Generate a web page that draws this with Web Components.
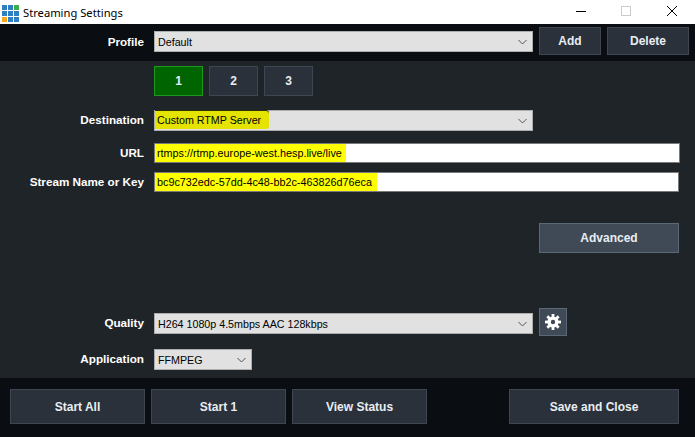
<!DOCTYPE html>
<html lang="en">
<head>
<meta charset="utf-8">
<title>Streaming Settings</title>
<style>
  html, body { margin: 0; height: 100%; background: #1f2429; }
  body { font-family: "Liberation Sans", Arial, sans-serif; overflow: hidden; }
  .page { display: flex; flex-direction: column; width: 695px; height: 437px; }
  .main { display: flex; flex-direction: column; height: 317px; box-sizing: border-box; padding-top: 5px; }
  .footer-gap { width: 70px; }
</style>
</head>
<body>
<div class="page">
  <title-bar>Streaming Settings</title-bar>

  <dark-band kind="top">
    <form-row label="Profile">
      <combo-box width="379" style="margin-top:1px">Default</combo-box>
      <vm-button w="62" h="28" style="margin-left:6px">Add</vm-button>
      <vm-button w="82" h="28" style="margin-left:6px">Delete</vm-button>
    </form-row>
  </dark-band>

  <div class="main">
    <tab-strip></tab-strip>
    <form-row label="Destination" style="margin-top:14px;--lb:2px">
      <combo-box width="379" mark="114" tone="#e4e400">Custom RTMP Server</combo-box>
    </form-row>
    <form-row label="URL" style="margin-top:12px;--lb:2px">
      <text-field width="526" mark="191">rtmps://rtmp.europe-west.hesp.live/live</text-field>
    </form-row>
    <form-row label="Stream Name or Key" style="margin-top:9px;--lb:2px">
      <text-field width="525" mark="222">bc9c732edc-57dd-4c48-bb2c-463826d76eca</text-field>
    </form-row>
    <form-row style="margin-top:31px">
      <vm-button w="140" h="30" tone="light" style="margin-left:385px">Advanced</vm-button>
    </form-row>
    <form-row label="Quality" style="margin-top:55px">
      <combo-box width="379" style="margin-top:3px">H264 1080p 4.5mbps AAC 128kbps</combo-box>
      <vm-button w="28" h="28" tone="light" style="margin-left:6px"><gear-icon></gear-icon></vm-button>
    </form-row>
    <form-row label="Application" style="margin-top:13px;--lb:2px">
      <combo-box width="98">FFMPEG</combo-box>
    </form-row>
  </div>

  <dark-band kind="bottom">
    <vm-button w="135" h="35">Start All</vm-button>
    <vm-button w="135" h="35">Start 1</vm-button>
    <vm-button w="135" h="35">View Status</vm-button>
    <span class="footer-gap"></span>
    <vm-button w="170" h="35">Save and Close</vm-button>
  </dark-band>
</div>

<script>
  // shadow root helper
  function shadow(el, html) {
    el.attachShadow({ mode: 'open' }).innerHTML = html;
  }

  class TitleBar extends HTMLElement {
    connectedCallback() {
      shadow(this, `
        <style>
          :host { display: flex; align-items: center; height: 24px; background: #fff; color: #000;
                  font: 11.2px "Noto Sans", "Liberation Sans", sans-serif; }
          .logo { margin: 3px 0 0 2px; flex: none; display: block; }
          .text { margin: 0 0 0 4px; flex: 1; white-space: nowrap; }
          .ctl { flex: none; display: block; }
        </style>
        <svg class="logo" width="17" height="17" viewBox="0 0 17 17">
          <rect x="0" y="0" width="5" height="5" fill="#2f7fc4"/>
          <rect x="6" y="0" width="5" height="5" fill="#2f7fc4"/>
          <rect x="12" y="0" width="5" height="5" fill="#3cae49"/>
          <rect x="0" y="6" width="5" height="5" fill="#2f7fc4"/>
          <rect x="6" y="6" width="5" height="5" fill="#2f7fc4"/>
          <rect x="12" y="6" width="5" height="5" fill="#2f7fc4"/>
          <rect x="0" y="12" width="5" height="5" fill="#f6a81c"/>
          <rect x="6" y="12" width="5" height="5" fill="#2f7fc4"/>
          <rect x="12" y="12" width="5" height="5" fill="#2f7fc4"/>
        </svg>
        <span class="text"><slot></slot></span>
        <svg class="ctl" width="120" height="24" viewBox="0 0 120 24">
          <path d="M1 11.5H11" stroke="#000" stroke-width="1" fill="none"/>
          <rect x="46.5" y="6.5" width="9" height="9" fill="none" stroke="#ccc"/>
          <path d="M92 6L102 16M102 6L92 16" stroke="#000" stroke-width="1" fill="none"/>
        </svg>
      `);
    }
  }

  class DarkBand extends HTMLElement {
    connectedCallback() {
      shadow(this, `
        <style>
          :host { display: flex; background: #0a0e12; box-sizing: border-box; align-items: flex-start; }
          :host([kind="top"]) { height: 37px; padding-top: 3px; }
          :host([kind="bottom"]) { height: 59px; padding: 11px 0 0 10px; gap: 6px; }
        </style>
        <slot></slot>
      `);
    }
  }

  // label column + controls
  class FormRow extends HTMLElement {
    connectedCallback() {
      const label = this.getAttribute('label') || '';
      shadow(this, `
        <style>
          :host { display: flex; align-items: center; }
          .label { width: 144px; margin: 0 10px var(--lb, 0) 0; flex: none; text-align: right; color: #fff;
                   font: bold 11.7px "Liberation Sans", Arial, sans-serif; white-space: nowrap; }
        </style>
        <span class="label">${label}</span>
        <slot></slot>
      `);
    }
  }

  class ComboBox extends HTMLElement {
    connectedCallback() {
      const w = this.getAttribute('width');
      const mark = this.getAttribute('mark');
      const tone = this.getAttribute('tone') || '#ff0';
      shadow(this, `
        <style>
          :host { display: flex; align-items: center; flex: none; box-sizing: border-box; width: ${w}px; height: 21px;
                  background: #e1e1e1; border: 1px solid #adadad; color: #000;
                  font: 10.7px "Liberation Sans", Arial, sans-serif; }
          .text { flex: 1; white-space: nowrap; box-sizing: border-box; padding-left: 3px; height: 100%; line-height: 20px; }
          .text.mark { flex: none; background: ${tone}; padding-left: 2px; width: ${mark}px; height: 18px; line-height: 19px;
                       align-self: flex-start; box-shadow: 0 -1px 0 #2c2f10; border-radius: 0 3px 3px 0; }
          .spacer { flex: 1; }
          svg { flex: none; margin-right: 5px; display: block; }
        </style>
        <span class="text ${mark ? 'mark' : ''}"><slot></slot></span>
        ${mark ? '<span class="spacer"></span>' : ''}
        <svg width="9" height="6" viewBox="0 0 9 6"><path d="M0.5 1L4.5 5L8.5 1" fill="none" stroke="#555" stroke-width="1"/></svg>
      `);
    }
  }

  class TextField extends HTMLElement {
    connectedCallback() {
      const w = this.getAttribute('width');
      const mark = this.getAttribute('mark');
      shadow(this, `
        <style>
          :host { display: flex; flex: none; box-sizing: border-box; width: ${w}px; height: 20px; background: #fff;
                  border: 1px solid #7a7a7a; color: #000; font: 10.8px "Liberation Sans", Arial, sans-serif; }
          .text { box-sizing: border-box; width: ${mark}px; height: 18px; line-height: 18px; background: #ff0;
                  padding-left: 2px; white-space: nowrap; }
        </style>
        <span class="text"><slot></slot></span>
      `);
    }
  }

  class VmButton extends HTMLElement {
    connectedCallback() {
      const w = this.getAttribute('w');
      const h = this.getAttribute('h');
      const light = this.getAttribute('tone') === 'light';
      shadow(this, `
        <style>
          :host { display: flex; align-items: center; justify-content: center; flex: none; box-sizing: border-box;
                  width: ${w}px; height: ${h}px; color: #e8edf2;
                  background: ${light ? '#3f4a56' : '#2a313a'}; border: 1px solid ${light ? '#5a6878' : '#3d4651'};
                  font: bold 12px "Liberation Sans", Arial, sans-serif; white-space: nowrap; }
        </style>
        <slot></slot>
      `);
    }
  }

  class TabStrip extends HTMLElement {
    connectedCallback() {
      shadow(this, `
        <style>
          :host { display: flex; gap: 6px; padding-left: 154px; }
          div { display: flex; align-items: center; justify-content: center; box-sizing: border-box; width: 49px; height: 30px;
                background: #2a313a; border: 1px solid #3d4651; color: #e8edf2;
                font: bold 12px "Liberation Sans", Arial, sans-serif; }
          .on { background: #006400; border-color: #1d9a1d; }
        </style>
        <div class="on">1</div><div>2</div><div>3</div>
      `);
    }
  }

  class GearIcon extends HTMLElement {
    connectedCallback() {
      // eight teeth around a ring
      let teeth = '';
      for (let a = 0; a < 360; a += 45) {
        teeth += `<rect x="6.6" y="0" width="2.8" height="4" transform="rotate(${a} 8 8)"/>`;
      }
      shadow(this, `
        <style>:host { display: block; width: 16px; height: 16px; } svg { display: block; }</style>
        <svg width="16" height="16" viewBox="0 0 16 16" fill="#fff">
          ${teeth}
          <path fill-rule="evenodd" d="M8 2.4a5.6 5.6 0 1 0 0 11.2a5.6 5.6 0 1 0 0-11.2zM8 5.8a2.2 2.2 0 1 1 0 4.4a2.2 2.2 0 1 1 0-4.4z"/>
        </svg>
      `);
    }
  }

  customElements.define('title-bar', TitleBar);
  customElements.define('dark-band', DarkBand);
  customElements.define('form-row', FormRow);
  customElements.define('combo-box', ComboBox);
  customElements.define('text-field', TextField);
  customElements.define('vm-button', VmButton);
  customElements.define('tab-strip', TabStrip);
  customElements.define('gear-icon', GearIcon);
</script>
</body>
</html>
